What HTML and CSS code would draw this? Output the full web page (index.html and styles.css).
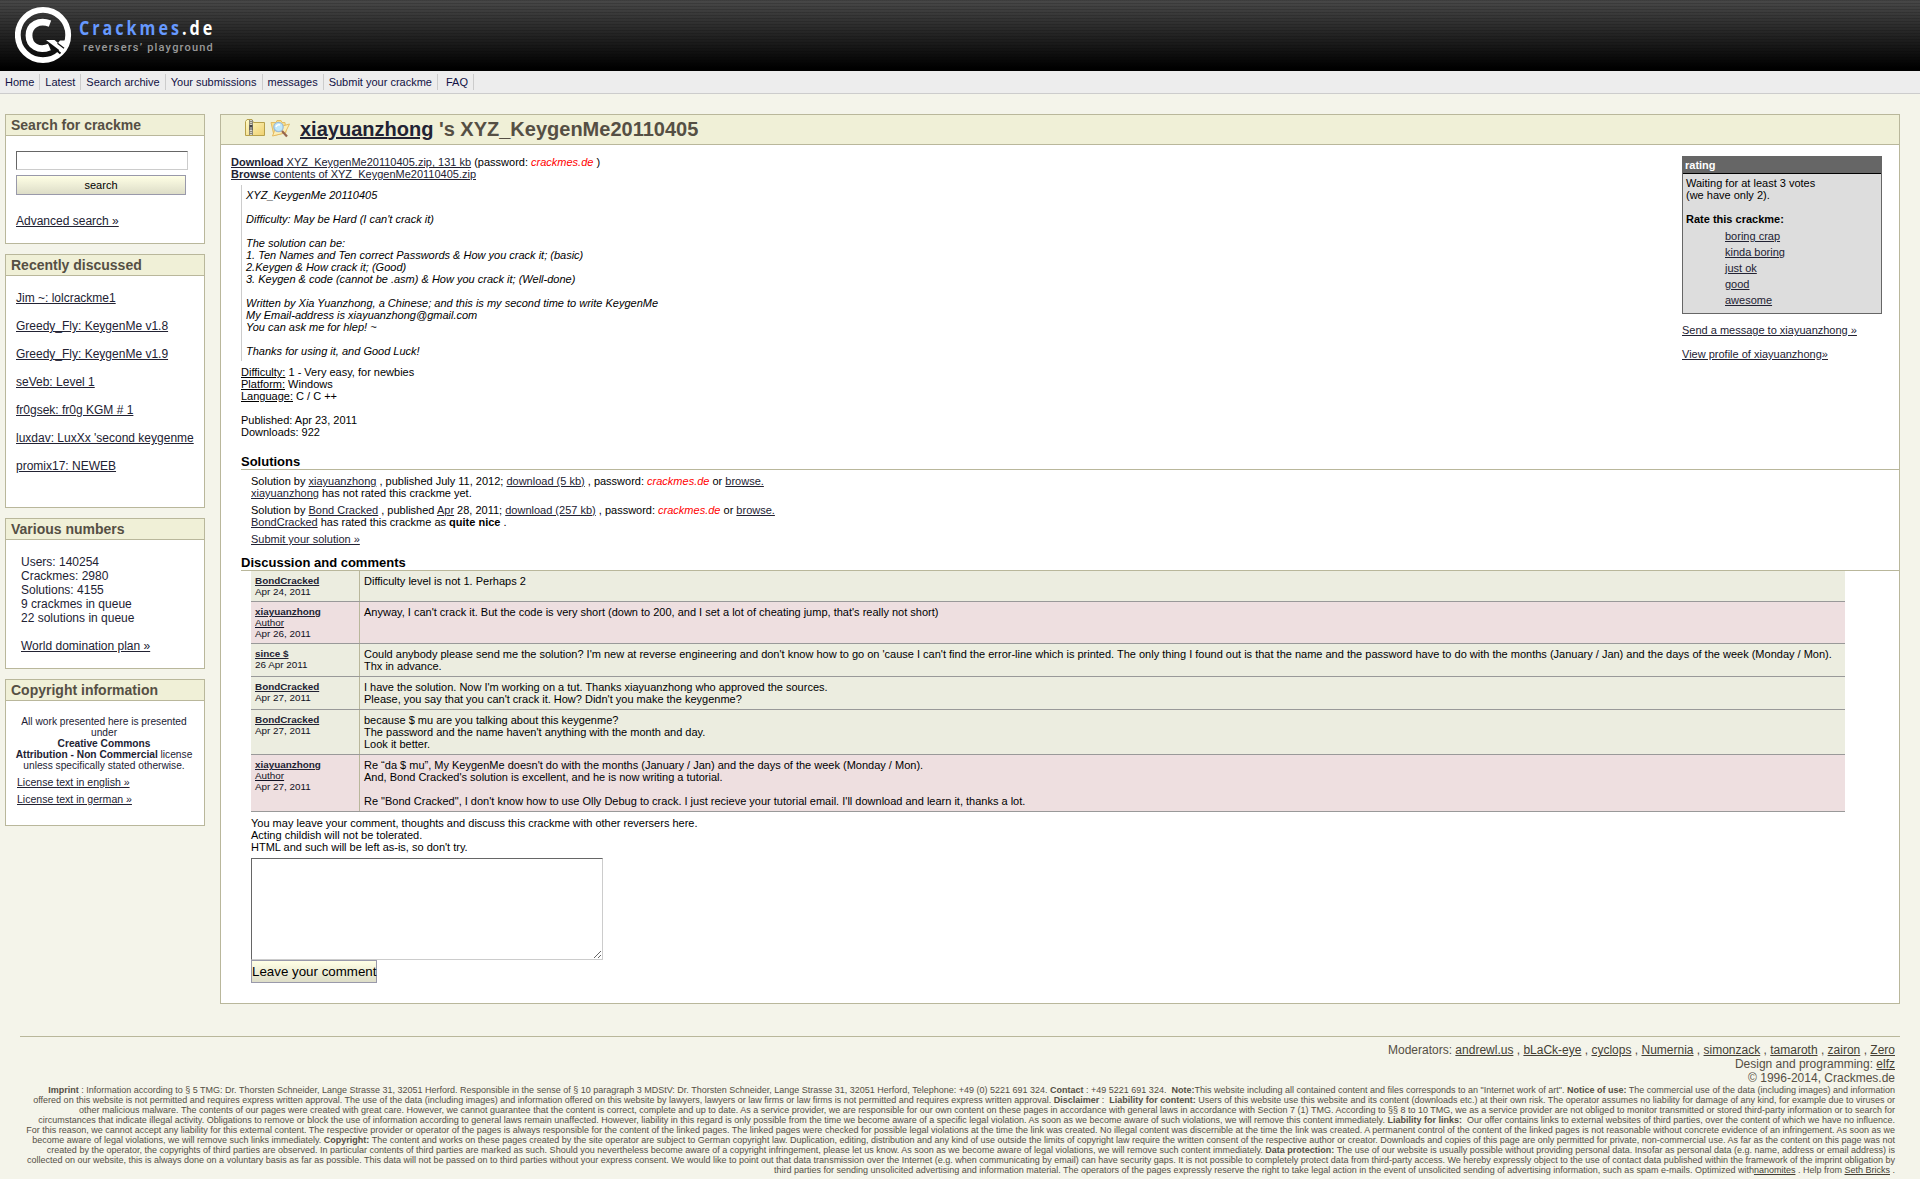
FILE: index.html
```html
<!DOCTYPE html>
<html lang="en">
<head>
<meta charset="utf-8">
<title>Crackmes.de</title>
<link rel="stylesheet" href="styles.css">
</head>
<body>
<header class="header">
  <svg class="logo" width="60" height="64" viewBox="0 0 60 64">
    <circle cx="28" cy="35" r="25.200" fill="none" stroke="#fff" stroke-width="5.800"/>
    <path d="M35 23.600C24 19.500 14 25 14 35.500S24 51.500 34.500 47" fill="none" stroke="#fff" stroke-width="6.800"/>
    <path d="M34 44l11.500 9.500" stroke="#0c0c0c" stroke-width="2"/>
    <path d="M31 40h8.500l3.500 3 2-2.500h8.500L48.500 52.500 45.500 51z" fill="#fff"/>
    <path d="M42.500 43.200l6.500 5" stroke="#0c0c0c" stroke-width="1.200"/>
  </svg>
  <div class="brand">
    <div class="brand-name">Crackmes<span class="tld">.de</span></div>
    <div class="brand-tag">reversers’ playground</div>
  </div>
</header>
<nav class="nav">
  <a>Home</a><a>Latest</a><a>Search archive</a><a>Your submissions</a><a>messages</a><a>Submit your crackme</a><a class="faq">FAQ</a>
</nav>
<div class="page">
  <aside class="side">
    <section class="box box-search">
      <h2>Search for crackme</h2>
      <input class="search-input" type="text">
      <button class="search-button">search</button>
      <a class="link">Advanced search »</a>
    </section>
    <section class="box box-recent">
      <h2>Recently discussed</h2>
      <ul>
        <li><a class="link">Jim ~: lolcrackme1</a></li>
        <li><a class="link">Greedy_Fly: KeygenMe v1.8</a></li>
        <li><a class="link">Greedy_Fly: KeygenMe v1.9</a></li>
        <li><a class="link">seVeb: Level 1</a></li>
        <li><a class="link">fr0gsek: fr0g KGM # 1</a></li>
        <li><a class="link">luxdav: LuxXx 'second keygenme</a></li>
        <li><a class="link">promix17: NEWEB</a></li>
      </ul>
    </section>
    <section class="box box-numbers">
      <h2>Various numbers</h2>
      <p>Users: 140254<br>Crackmes: 2980<br>Solutions: 4155<br>9 crackmes in queue<br>22 solutions in queue<br><br><a class="link">World domination plan »</a></p>
    </section>
    <section class="box box-copy">
      <h2>Copyright information</h2>
      <p>All work presented here is presented<br>under<br><b>Creative Commons</b><br><b>Attribution - Non Commercial</b> license<br>unless specifically stated otherwise.</p>
      <div class="license"><a class="link">License text in english »</a></div>
      <div class="license"><a class="link">License text in german »</a></div>
    </section>
  </aside>
  <main class="main">
    <h1>
      <svg class="icon" width="20" height="18" viewBox="0 0 20 18">
        <defs><linearGradient id="fold" x1="0" y1="0" x2="1" y2="1"><stop offset="0" stop-color="#fffcc8"/><stop offset="1" stop-color="#efd070"/></linearGradient></defs>
        <path d="M.5 16.500V2.500L2 .5h5l1.500 3h11v13z" fill="url(#fold)" stroke="#b7a04a"/>
        <path d="M4 1h4v15H4z" fill="#8c8878"/>
        <path d="M6 1v15" stroke="#e8e8e0" stroke-width="1.500" stroke-dasharray="1 1"/>
        <path d="M4.500 6h3v5h-3z" fill="#444"/><path d="M6 8v4" stroke="#ddd"/>
      </svg>
      <svg class="icon" width="20" height="19" viewBox="0 0 20 19">
        <path d="M1 3.500h5l1-2h4l1 2h3l1 10-12 3z" fill="#fae08a" stroke="#e6bd62"/>
        <path d="M2.500 17l3-8L19.500 5 15 14z" fill="#fdeeb4" stroke="#e4ba60"/>
        <circle cx="8.500" cy="8" r="4.700" fill="#bfe8fc" stroke="#9dbbd6" stroke-width="1.300"/>
        <path d="M6 8a3 3 0 0 1 4-2" fill="none" stroke="#fff" stroke-width="1.500"/>
        <path d="M12 12l5 5.500" stroke="#95654e" stroke-width="2.200"/>
      </svg>
      <a class="author">xiayuanzhong</a> 's XYZ_KeygenMe20110405
    </h1>
    <div class="content">
      <div class="details">
        <div class="files"><a class="link"><b>Download</b> XYZ_KeygenMe20110405.zip, 131 kb</a> (password: <i class="pw">crackmes.de</i> )<br><a class="link"><b>Browse</b> contents of XYZ_KeygenMe20110405.zip</a></div>
        <div class="readme">XYZ_KeygenMe 20110405<br><br>Difficulty: May be Hard (I can't crack it)<br><br>The solution can be:<br>1. Ten Names and Ten correct Passwords &amp; How you crack it; (basic)<br>2.Keygen &amp; How crack it; (Good)<br>3. Keygen &amp; code (cannot be .asm) &amp; How you crack it; (Well-done)<br><br>Written by Xia Yuanzhong, a Chinese; and this is my second time to write KeygenMe<br>My Email-address is xiayuanzhong@gmail.com<br>You can ask me for hlep! ~<br><br>Thanks for using it, and Good Luck!</div>
        <div class="facts"><u>Difficulty:</u> 1 - Very easy, for newbies<br><u>Platform:</u> Windows<br><u>Language:</u> C / C ++<br><br>Published: Apr 23, 2011<br>Downloads: 922</div>
      </div>
      <div class="rate">
        <div class="rating">
          <h4>rating</h4>
          <p>Waiting for at least 3 votes<br>(we have only 2).<br><br><b>Rate this crackme:</b></p>
          <ul>
            <li><a class="link">boring crap</a></li>
            <li><a class="link">kinda boring</a></li>
            <li><a class="link">just ok</a></li>
            <li><a class="link">good</a></li>
            <li><a class="link">awesome</a></li>
          </ul>
        </div>
        <a class="link">Send a message to xiayuanzhong »</a><br><br><a class="link">View profile of xiayuanzhong»</a>
      </div>
    </div>
    <h3>Solutions</h3>
    <div class="solutions">
      <p>Solution by <a class="link">xiayuanzhong</a> , published July 11, 2012; <a class="link">download (5 kb)</a> , password: <i class="pw">crackmes.de</i> or <a class="link">browse.</a><br><a class="link">xiayuanzhong</a> has not rated this crackme yet.</p>
      <p>Solution by <a class="link">Bond Cracked</a> , published <a class="link">Apr</a> 28, 2011; <a class="link">download (257 kb)</a> , password: <i class="pw">crackmes.de</i> or <a class="link">browse.</a><br><a class="link">BondCracked</a> has rated this crackme as <b>quite nice</b> .</p>
      <p><a class="link">Submit your solution »</a></p>
    </div>
    <h3>Discussion and comments</h3>
    <div class="comments">
      <div class="comment"><div class="who"><a>BondCracked</a><br>Apr 24, 2011</div><div class="said">Difficulty level is not 1. Perhaps 2</div></div>
      <div class="comment by-author"><div class="who"><a>xiayuanzhong</a><br><u>Author</u><br>Apr 26, 2011</div><div class="said">Anyway, I can't crack it. But the code is very short (down to 200, and I set a lot of cheating jump, that's really not short)</div></div>
      <div class="comment"><div class="who"><a>since $</a><br>26 Apr 2011</div><div class="said">Could anybody please send me the solution? I'm new at reverse engineering and don't know how to go on 'cause I can't find the error-line which is printed. The only thing I found out is that the name and the password have to do with the months (January / Jan) and the days of the week (Monday / Mon).<br>Thx in advance.</div></div>
      <div class="comment"><div class="who"><a>BondCracked</a><br>Apr 27, 2011</div><div class="said">I have the solution. Now I'm working on a tut. Thanks xiayuanzhong who approved the sources.<br>Please, you say that you can't crack it. How? Didn't you make the keygenme?</div></div>
      <div class="comment"><div class="who"><a>BondCracked</a><br>Apr 27, 2011</div><div class="said">because $ mu are you talking about this keygenme?<br>The password and the name haven't anything with the month and day.<br>Look it better.</div></div>
      <div class="comment by-author"><div class="who"><a>xiayuanzhong</a><br><u>Author</u><br>Apr 27, 2011</div><div class="said">Re “da $ mu”, My KeygenMe doesn't do with the months (January / Jan) and the days of the week (Monday / Mon).<br>And, Bond Cracked's solution is excellent, and he is now writing a tutorial.<br><br>Re "Bond Cracked", I don't know how to use Olly Debug to crack. I just recieve your tutorial email. I'll download and learn it, thanks a lot.</div></div>
    </div>
    <form class="reply">
      <p>You may leave your comment, thoughts and discuss this crackme with other reversers here.<br>Acting childish will not be tolerated.<br>HTML and such will be left as-is, so don't try.</p>
      <textarea></textarea>
      <button type="button">Leave your comment</button>
    </form>
  </main>
</div>
<footer class="footer">
  <p>Moderators: <a>andrewl.us</a> , <a>bLaCk-eye</a> , <a>cyclops</a> , <a>Numernia</a> , <a>simonzack</a> , <a>tamaroth</a> , <a>zairon</a> , <a>Zero</a><br>Design and programming: <a>elfz</a><br>© 1996-2014, Crackmes.de</p>
  <p class="legal"><b>Imprint</b> : Information according to § 5 TMG: Dr. Thorsten Schneider, Lange Strasse 31, 32051 Herford. Responsible in the sense of § 10 paragraph 3 MDStV: Dr. Thorsten Schneider, Lange Strasse 31, 32051 Herford, Telephone: +49 (0) 5221 691 324. <b>Contact</b> : +49 5221 691 324.&nbsp; <b>Note:</b>This website including all contained content and files corresponds to an "Internet work of art". <b>Notice of use:</b> The commercial use of the data (including images) and information<br>
  offered on this website is not permitted and requires express written approval. The use of the data (including images) and information offered on this website by lawyers, lawyers or law firms or law firms is not permitted and requires express written approval. <b>Disclaimer</b> :&nbsp; <b>Liability for content:</b> Users of this website use this website and its content (downloads etc.) at their own risk. The operator assumes no liability for damage of any kind, for example due to viruses or<br>
  other malicious malware. The contents of our pages were created with great care. However, we cannot guarantee that the content is correct, complete and up to date. As a service provider, we are responsible for our own content on these pages in accordance with general laws in accordance with Section 7 (1) TMG. According to §§ 8 to 10 TMG, we as a service provider are not obliged to monitor transmitted or stored third-party information or to search for<br>
  circumstances that indicate illegal activity. Obligations to remove or block the use of information according to general laws remain unaffected. However, liability in this regard is only possible from the time we become aware of a specific legal violation. As soon as we become aware of such violations, we will remove this content immediately. <b>Liability for links:</b>&nbsp; Our offer contains links to external websites of third parties, over the content of which we have no influence.<br>
  For this reason, we cannot accept any liability for this external content. The respective provider or operator of the pages is always responsible for the content of the linked pages. The linked pages were checked for possible legal violations at the time the link was created. No illegal content was discernible at the time the link was created. A permanent control of the content of the linked pages is not reasonable without concrete evidence of an infringement. As soon as we<br>
  become aware of legal violations, we will remove such links immediately. <b>Copyright:</b> The content and works on these pages created by the site operator are subject to German copyright law. Duplication, editing, distribution and any kind of use outside the limits of copyright law require the written consent of the respective author or creator. Downloads and copies of this page are only permitted for private, non-commercial use. As far as the content on this page was not<br>
  created by the operator, the copyrights of third parties are observed. In particular contents of third parties are marked as such. Should you nevertheless become aware of a copyright infringement, please let us know. As soon as we become aware of legal violations, we will remove such content immediately. <b>Data protection:</b> The use of our website is usually possible without providing personal data. Insofar as personal data (e.g. name, address or email address) is<br>
  collected on our website, this is always done on a voluntary basis as far as possible. This data will not be passed on to third parties without your express consent. We would like to point out that data transmission over the Internet (e.g. when communicating by email) can have security gaps. It is not possible to completely protect data from third-party access. We hereby expressly object to the use of contact data published within the framework of the imprint obligation by<br>
  third parties for sending unsolicited advertising and information material. The operators of the pages expressly reserve the right to take legal action in the event of unsolicited sending of advertising information, such as spam e-mails. Optimized with<a>nanomites</a> . Help from <a>Seth Bricks</a> .</p>
</footer>
</body>
</html>
```
FILE: styles.css
```css
* { box-sizing: border-box; margin: 0; padding: 0; }
html, body { height: 1179px; overflow: hidden; }
body {
  background: #f4f4ea;
  color: #000;
  font: 11px/12px "Liberation Sans", Arial, sans-serif;
}
ul { list-style: none; }
.link { color: #223; text-decoration: underline; }
.pw { color: #f00; }

.header {
  height: 71px;
  display: flex;
  background:
    repeating-linear-gradient(rgba(0,0,0,.15) 0 1px, transparent 1px 3px),
    linear-gradient(#484848, #000 68px);
}
.logo { margin-left: 15px; }
.brand { margin: 16px 0 0 4px; font-family: "Open Sans", sans-serif; font-weight: 700; }
.brand-name { color: #69f; font-size: 19px; line-height: 25px; letter-spacing: 3.5px; transform: scaleX(.85); transform-origin: 0 0; }
.tld { color: #fff; }
.brand-tag { color: #999; font: 500 11px/13px Roboto, sans-serif; letter-spacing: 1.2px; padding-left: 4px; }

.nav { height: 23px; display: flex; background: #ededed; border-bottom: 1px solid #ccc; padding-top: 3px; }
.nav a { height: 16px; line-height: 17px; color: #114; padding: 0 5px; border-right: 1px solid #ccc; }
.nav .faq { padding-left: 8px; }

.page { display: flex; align-items: flex-start; gap: 15px; padding: 20px 0 0 5px; height: 910px; }
.side { width: 200px; display: flex; flex-direction: column; gap: 10px; font-size: 12px; line-height: 14px; color: #223; }
.box { border: 1px solid #b9b79b; background: #fff; }
.box h2 { height: 21px; background: #f0f0d7; border-bottom: 1px solid #b9b79b; color: #554f44; font-size: 14px; line-height: 20px; padding-left: 5px; }
.box-search { height: 130px; display: flex; flex-direction: column; align-items: flex-start; padding-bottom: 1px; }
.box-search h2 { width: 100%; }
.search-input { width: 172px; height: 19px; margin: 15px 0 5px 10px; border: 1px solid; border-color: #666 #ccc #ccc #666; background: #fff; }
.search-button { width: 170px; height: 20px; margin-left: 10px; }
button { border: 1px solid #99a; background: linear-gradient(#ffffe5, #ddddc8); font-family: "Liberation Sans", Arial, sans-serif; color: #000; }
.search-button { font-size: 11px; line-height: 18px; }
.box-search .link { margin: 19px 0 0 10px; }
.box-recent { height: 254px; }
.box-recent ul { padding: 15px 0 0 10px; white-space: nowrap; }
.box-recent li { height: 28px; }
.box-numbers { height: 151px; }
.box-numbers p { padding: 15px 0 0 15px; }
.box-copy { height: 147px; }
.box-copy p { padding: 15px 2px 0 0; text-align: center; font-size: 10.2px; line-height: 11px; white-space: nowrap; }
.license { font-size: 10.56px; line-height: 12px; padding: 5px 0 0 11px; }

.main { width: 1680px; height: 890px; background: #fff; border: 1px solid #b9b79b; }
.main h1 { height: 30px; background: #f0f0d7; border-bottom: 1px solid #b9b79b; display: flex; white-space: pre; color: #554f44; font-size: 20px; line-height: 29px; padding-left: 24px; }
.icon { margin: 4px 5px 0 0; }
.author { color: #223; text-decoration: underline; margin-left: 5px; }
.content { display: flex; justify-content: space-between; height: 307px; padding: 11px 17px 0 10px; }
.readme { margin: 5px 0 5px 10px; border-left: 1px solid #ccc; padding: 4px; font-style: italic; }
.facts { margin-left: 10px; }
.rate { width: 200px; }
.rating { height: 158px; border: 1px solid #666; background: #ddd; margin-bottom: 10px; }
.rating h4 { height: 17px; background: #666; border-bottom: 1px solid #000; color: #fff; font-size: 11px; line-height: 17px; padding-left: 2px; }
.rating p { padding: 3px; }
.rating ul { padding-left: 42px; line-height: 16px; }
.main h3 { margin-left: 20px; border-bottom: 1px solid #b9b79b; font-size: 13px; line-height: 19px; height: 18px; }
.solutions { padding: 5px 0 0 30px; height: 83px; }
.solutions p { margin-bottom: 5px; }
.comments { width: 1594px; margin-left: 30px; }
.comment { display: grid; grid-template-columns: 109px 1fr; background: #ecede0; border-bottom: 1px solid #999; min-height: 31px; }
.by-author { background: #eedfe0; }
.who { border-right: 1px solid #b9b79b; padding: 4px; font-size: 9.9px; line-height: 11px; color: #112; }
.who a { font-weight: 700; text-decoration: underline; color: #223; }
.said { padding: 4px; white-space: nowrap; }
.reply { display: flex; flex-direction: column; align-items: flex-start; padding: 5px 0 0 30px; }
.reply textarea { width: 352px; height: 102px; margin-top: 5px; border: 1px solid; border-color: #666 #ccc #ccc #666; background: #fff; }
.reply button { width: 126px; height: 23px; font-size: 13.333px; white-space: nowrap; }

.footer { margin: 32px 20px 0; border-top: 1px solid #b9b79b; padding: 6px 5px 0; text-align: right; color: #554f44; font-size: 12px; line-height: 14px; white-space: nowrap; }
.footer a { color: #443f34; text-decoration: underline; }
.legal { font-size: 9px; line-height: 10px; }
```
